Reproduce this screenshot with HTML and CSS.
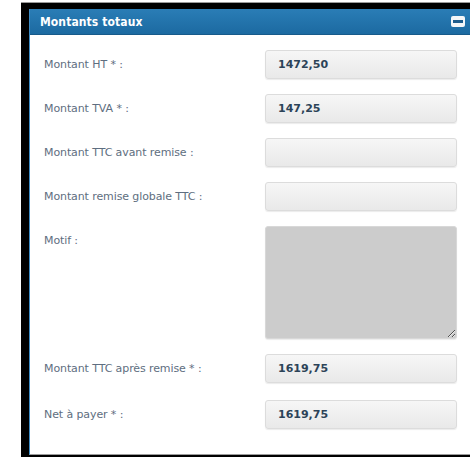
FILE: index.html
```html
<!DOCTYPE html>
<html lang="fr">
<head>
<meta charset="utf-8">
<title>Montants totaux</title>
<link rel="stylesheet" href="styles.css">
</head>
<body>
<div class="frame">
  <section class="panel">
    <header class="panel-header">
      <h2 class="panel-title">Montants totaux</h2>
      <button class="collapse" type="button" aria-label="Réduire"><span class="collapse-bar"></span></button>
    </header>
    <div class="panel-body">
      <div class="form-grid">
        <label class="field-label" for="ht">Montant HT * :</label>
        <input class="field-input" id="ht" type="text" value="1472,50">

        <label class="field-label" for="tva">Montant TVA * :</label>
        <input class="field-input" id="tva" type="text" value="147,25">

        <label class="field-label" for="ttc">Montant TTC avant remise :</label>
        <input class="field-input" id="ttc" type="text" value="">

        <label class="field-label" for="remise">Montant remise globale TTC :</label>
        <input class="field-input" id="remise" type="text" value="">

        <label class="field-label" for="motif">Motif :</label>
        <textarea class="field-textarea" id="motif"></textarea>

        <label class="field-label" for="ttc-apres">Montant TTC après remise * :</label>
        <input class="field-input" id="ttc-apres" type="text" value="1619,75">

        <label class="field-label field-label--last" for="net">Net à payer * :</label>
        <input class="field-input field-input--last" id="net" type="text" value="1619,75">
      </div>
    </div>
  </section>
</div>
</body>
</html>
```

FILE: styles.css
```css
html, body {
  margin: 0;
  padding: 0;
  background: #ffffff;
  overflow: hidden;
}

body {
  font-family: "DejaVu Sans", sans-serif;
}

.frame {
  margin: 2px 0 0 21px;
  border-top: 1px solid #9a9a9a;
  background: #000;
  padding: 6px 0 4px 8px;
}

.panel {
  background: #fff;
  border-left: 1px solid #3d8cc4;
  border-bottom: 1px solid #9c9c9c;
}

.panel-header {
  height: 26px;
  display: flex;
  align-items: center;
  justify-content: space-between;
  padding: 0 5px 0 10px;
  background: linear-gradient(#2a7db6, #1c6aa1);
  border-bottom: 1px solid #175a8a;
  box-sizing: border-box;
}

.panel-title {
  margin: 0;
  font-family: "DejaVu Sans Condensed", "DejaVu Sans", sans-serif;
  font-stretch: condensed;
  font-size: 12px;
  font-weight: bold;
  color: #ffffff;
  letter-spacing: 0.1px;
}

.collapse {
  width: 14px;
  height: 11px;
  padding: 0;
  border: none;
  border-radius: 2px;
  background: #f4f6f8;
  display: flex;
  align-items: center;
  justify-content: center;
}

.collapse-bar {
  width: 10px;
  height: 3px;
  background: #1f5d8c;
}

.panel-body {
  padding: 15px 13px 25px 14px;
}

.form-grid {
  display: grid;
  grid-template-columns: 221px 192px;
  row-gap: 15px;
  align-items: start;
}

.field-label {
  font-size: 11px;
  letter-spacing: -0.1px;
  color: #5e6e80;
  line-height: 29px;
}

.field-input,
.field-textarea {
  box-sizing: border-box;
  width: 192px;
  margin: 0;
  border: 1px solid #dcdcdc;
  border-radius: 3px;
  box-shadow: 0 1px 1px rgba(0, 0, 0, 0.08);
  font-family: inherit;
}

.field-input {
  height: 29px;
  padding: 0 12px;
  background: linear-gradient(#f6f6f6, #e9e9e9);
  font-size: 11px;
  font-weight: bold;
  color: #2c4358;
  outline: none;
}

.field-label--last,
.field-input--last {
  margin-top: 2px;
}

.field-textarea {
  height: 113px;
  background: #cccccc;
  border-color: #d8d8d8;
  resize: vertical;
}
```
